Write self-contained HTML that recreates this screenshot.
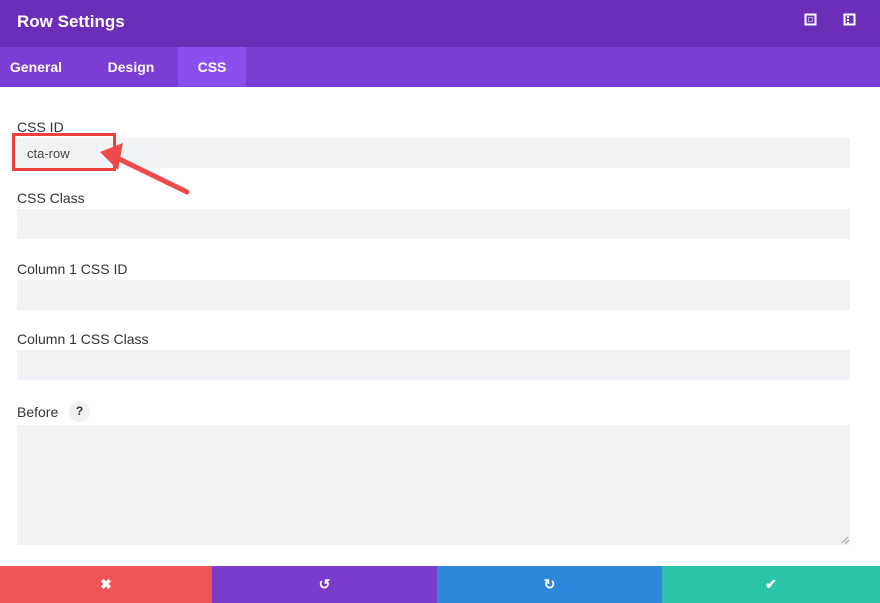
<!DOCTYPE html>
<html><head><style>
*{margin:0;padding:0;box-sizing:border-box}
body{width:880px;height:603px;overflow:hidden;background:#fff;font-family:"Liberation Sans",sans-serif;position:relative}
.hdr{position:absolute;left:0;top:0;width:880px;height:47px;background:#6c2eb9;color:#fff;font-weight:bold;font-size:17px;padding:12px 17px}
.tabs{position:absolute;left:0;top:47px;width:880px;height:40px;background:#7b3dd3}
.tab{position:absolute;top:0;height:40px;line-height:40px;color:#fff;font-weight:bold;font-size:14px;text-align:center}
.lbl{position:absolute;left:17px;font-size:14px;color:#333}
.inp{position:absolute;left:17px;width:833px;background:#eff3f7}
.btn{position:absolute;top:566px;height:37px;color:#fff;font-weight:bold;font-size:14px;text-align:center;line-height:37px}
</style></head><body>
<div class="hdr">Row Settings</div>
<svg style="position:absolute;left:804px;top:13px" width="14" height="14"><rect x="1.5" y="1.5" width="10" height="10" fill="none" stroke="#fff" stroke-width="2"/><rect x="4.5" y="4.5" width="4" height="4" fill="none" stroke="#fff" stroke-width="1" stroke-dasharray="1 1"/></svg>
<svg style="position:absolute;left:843px;top:13px" width="14" height="14"><rect x="1.5" y="1.5" width="10" height="10" fill="none" stroke="#fff" stroke-width="2"/><rect x="4" y="3" width="2" height="2" fill="#fff"/><rect x="4" y="6" width="2" height="2" fill="#fff"/><rect x="4" y="9" width="2" height="2" fill="#fff"/></svg>
<div class="tabs">
<div class="tab" style="left:0;width:72px">General</div>
<div class="tab" style="left:95px;width:72px">Design</div>
<div class="tab" style="left:178px;width:68px;background:#8b4ff0">CSS</div>
</div>
<div class="lbl" style="top:119px">CSS ID</div>
<div class="inp" style="top:138px;height:30px"></div>
<div style="position:absolute;left:27px;top:146px;font-size:13px;color:#444">cta-row</div>
<div style="position:absolute;left:12px;top:133px;width:104px;height:38px;border:3px solid #ef4040"></div>
<svg style="position:absolute;left:0;top:0" width="880" height="603"><line x1="187" y1="192" x2="115" y2="157" stroke="#ef4a4a" stroke-width="5" stroke-linecap="round"/><polygon points="100,152 123,143 118,170" fill="#ef4a4a"/>
<path d="M842 538 L848 532 M845 541 L849 537" stroke="#888" stroke-width="1"/></svg>
<div class="lbl" style="top:190px">CSS Class</div>
<div class="inp" style="top:209px;height:30px"></div>
<div class="lbl" style="top:261px">Column 1 CSS ID</div>
<div class="inp" style="top:280px;height:30px"></div>
<div class="lbl" style="top:331px">Column 1 CSS Class</div>
<div class="inp" style="top:350px;height:30px"></div>
<div class="lbl" style="top:404px">Before</div>
<div style="position:absolute;left:69px;top:401px;width:21px;height:21px;border-radius:50%;background:#eff3f7;font-size:12px;font-weight:bold;text-align:center;line-height:21px;color:#333">?</div>
<div class="inp" style="top:425px;height:120px"></div>
<svg style="position:absolute;left:0;top:0" width="880" height="603"><path d="M842 543 L848 537 M845 544 L849 540" stroke="#999" stroke-width="1"/></svg>
<div class="btn" style="left:0;width:212px;background:#ef5555">✖</div>
<div class="btn" style="left:212px;width:225px;background:#7b3bcb">↺</div>
<div class="btn" style="left:437px;width:225px;background:#2d87da">↻</div>
<div class="btn" style="left:662px;width:218px;background:#29c4a9">✔</div>
</body></html>
